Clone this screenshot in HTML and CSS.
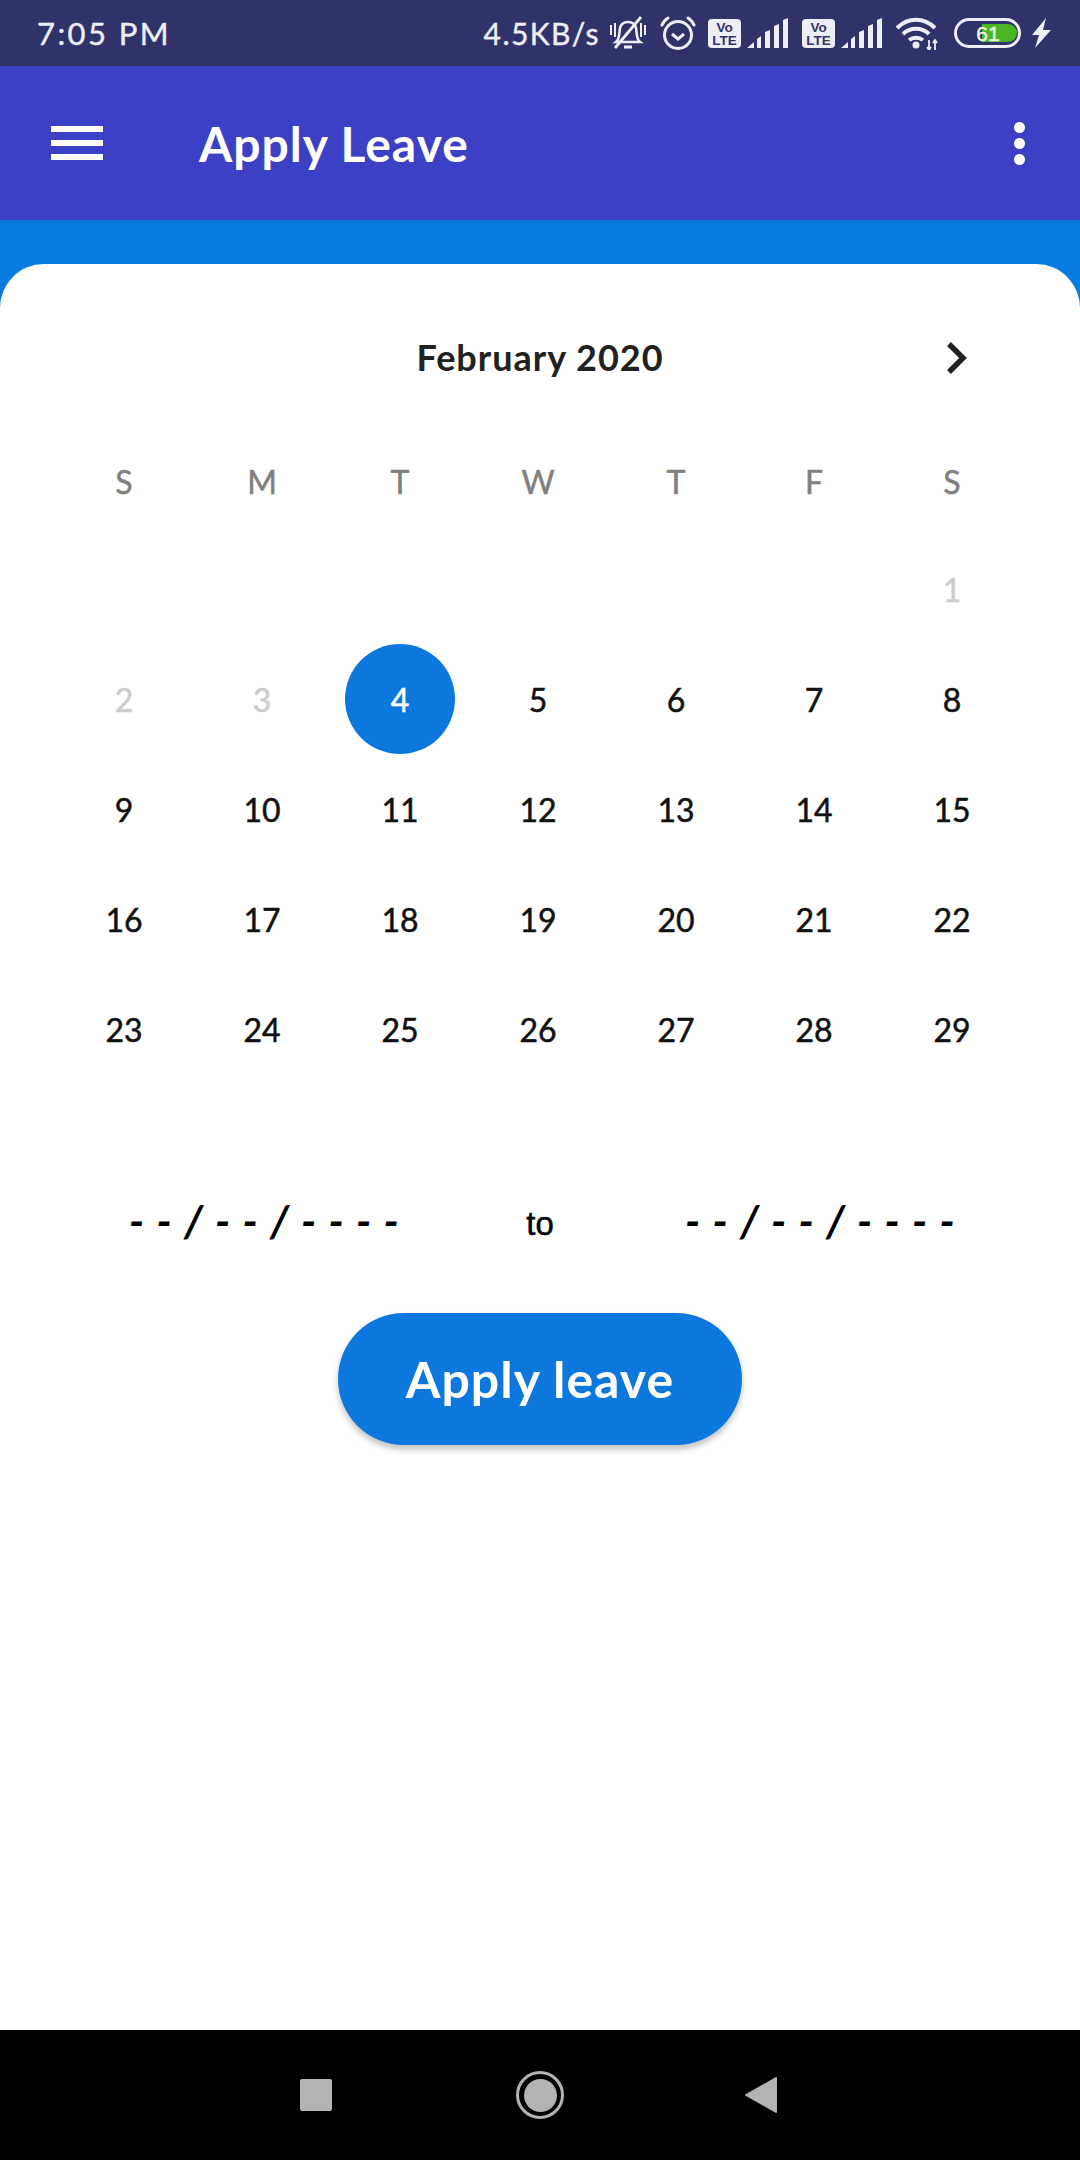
FILE: index.html
```html
<!DOCTYPE html>
<html lang="en">
<head>
    <meta charset="UTF-8">
    <meta name="viewport" content="width=device-width, initial-scale=1.0">
    <title>Apply Leave</title>
    <link rel="stylesheet" href="styles.css">
</head>
<body>

    <!-- Android status bar -->
    <div class="status-bar">
        <span class="status-time">7:05 PM</span>
        <div class="status-icons">
            <span class="status-speed">4.5KB/s</span>
            <svg class="icon-bell" width="36" height="34" viewBox="0 0 36 34" fill="none" stroke="#eeeef6" stroke-width="2.6">
                <path d="M6 26c4-3 3-9 4-14 1-4 4-6 8-6s7 2 8 6c1 5 0 11 4 14z"/>
                <path d="M14 31h8" stroke-width="3"/>
                <path d="M1 9v10M5 7v14M31 7v14M35 9v10" stroke-width="2"/>
                <path d="M31 1 5 32" stroke-width="2.8"/>
            </svg>
            <svg class="icon-alarm" width="36" height="34" viewBox="0 0 36 34" fill="none" stroke="#eeeef6" stroke-width="3">
                <circle cx="18" cy="19" r="13.5"/>
                <path d="M12 18l6 5 6-5"/>
                <path d="M2 9c1-3 3-5 6-7M34 9c-1-3-3-5-6-7" stroke-linecap="round"/>
            </svg>
            <svg class="icon-volte" width="33" height="29" viewBox="0 0 33 29">
                <rect width="33" height="29" rx="4" fill="#eeeef6"/>
                <text x="16.5" y="13" text-anchor="middle" class="volte-text">Vo</text>
                <text x="16.5" y="26" text-anchor="middle" class="volte-text">LTE</text>
            </svg>
            <svg class="icon-signal" width="41" height="30" viewBox="0 0 41 30" fill="#eeeef6">
                <path d="M0 30l7-6v6zM10 21l4-3v12h-4zM18 14l5-2v18h-5zM27 8l5-2v24h-5zM36 2l5-2v30h-5z"/>
            </svg>
            <svg class="icon-volte" width="33" height="29" viewBox="0 0 33 29">
                <rect width="33" height="29" rx="4" fill="#eeeef6"/>
                <text x="16.5" y="13" text-anchor="middle" class="volte-text">Vo</text>
                <text x="16.5" y="26" text-anchor="middle" class="volte-text">LTE</text>
            </svg>
            <svg class="icon-signal" width="41" height="30" viewBox="0 0 41 30" fill="#eeeef6">
                <path d="M0 30l7-6v6zM10 21l4-3v12h-4zM18 14l5-2v18h-5zM27 8l5-2v24h-5zM36 2l5-2v30h-5z"/>
            </svg>
            <svg class="icon-wifi" width="42" height="33" viewBox="0 0 42 33" fill="none" stroke="#eeeef6" stroke-width="4">
                <path d="M1 11c11-11 27-11 38 0M7 17c7-7 19-7 26 0M13 23c4-3 10-3 14 0"/>
                <circle cx="20" cy="28" r="3.5" fill="#eeeef6" stroke="none"/>
                <path d="M33 23v10M39 23v10M31 30l2 3 2-3M37 26l2-3 2 3" stroke-width="1.8"/>
            </svg>
            <svg class="icon-battery" width="67" height="30" viewBox="0 0 67 30">
                <rect x="1.5" y="1.5" width="64" height="27" rx="13.5" fill="none" stroke="#eeeef6" stroke-width="3"/>
                <path d="M28 6h26a9 9 0 0 1 0 18h-26z" fill="#4bb524"/>
                <text x="34" y="23" text-anchor="middle" class="battery-text">61</text>
            </svg>
            <svg class="icon-bolt" width="19" height="30" viewBox="0 0 19 30" fill="#eeeef6">
                <path d="M14 0 0 17h7L3 30 19 12h-8z"/>
            </svg>
        </div>
    </div>

    <header class="app-bar">
        <div class="menu-icon"><span></span><span></span><span></span></div>
        <h1 class="app-title">Apply Leave</h1>
        <div class="more-icon"><span></span><span></span><span></span></div>
    </header>

    <div class="page">
        <div class="card">
            <div class="month-row">
                <div></div>
                <div class="month-name">February 2020</div>
                <svg class="month-next" width="22" height="34" viewBox="0 0 22 34" fill="none" stroke="#212121" stroke-width="5.5">
                    <path d="M3 3l14 14L3 31"/>
                </svg>
            </div>

            <div class="week-row">
                <span>S</span><span>M</span><span>T</span><span>W</span><span>T</span><span>F</span><span>S</span>
            </div>

            <div class="days">
                <span></span><span></span><span></span><span></span><span></span><span></span><span class="past">1</span>
                <span class="past">2</span><span class="past">3</span><span class="today"><b>4</b></span><span>5</span><span>6</span><span>7</span><span>8</span>
                <span>9</span><span>10</span><span>11</span><span>12</span><span>13</span><span>14</span><span>15</span>
                <span>16</span><span>17</span><span>18</span><span>19</span><span>20</span><span>21</span><span>22</span>
                <span>23</span><span>24</span><span>25</span><span>26</span><span>27</span><span>28</span><span>29</span>
            </div>

            <div class="date-range">
                <span class="date-value">--/--/----</span>
                <span class="date-to">to</span>
                <span class="date-value">--/--/----</span>
            </div>

            <button class="apply-button">Apply leave</button>
        </div>
    </div>

    <!-- Android navigation bar -->
    <div class="nav-bar">
        <div class="nav-square"></div>
        <div class="nav-home"><span></span></div>
        <svg width="32" height="36" viewBox="0 0 32 36" fill="#b3b3b3">
            <path d="M31 0a1 1 0 0 1 1 1v34a1 1 0 0 1-1 1L1 19a1 1 0 0 1 0-2z"/>
        </svg>
    </div>

</body>
</html>
```

FILE: styles.css
```css
body {
    font-family: Lato, "Open Sans", sans-serif;
    margin: 0;
    width: 1080px;
    height: 2160px;
    display: flex;
    flex-direction: column;
    background-color: #fff;
}

/* status bar */
.status-bar {
    height: 66px;
    flex: none;
    display: flex;
    align-items: center;
    justify-content: space-between;
    padding: 0 29px 0 37px;
    background-color: #303369;
    color: #eeeef6;
}
.status-time {
    font-size: 31px;
    letter-spacing: 2.4px;
    -webkit-text-stroke: 0.4px #eeeef6;
}
.status-icons {
    display: flex;
    align-items: center;
}
.status-speed {
    font-size: 30px;
    letter-spacing: 1.4px;
    margin-right: 10px;
    -webkit-text-stroke: 0.4px #eeeef6;
}
.icon-bell { margin-right: 14px; }
.icon-alarm { margin-right: 12px; }
.icon-volte { margin-right: 6px; }
.icon-signal { margin-right: 14px; }
.icon-wifi { margin-right: 16px; }
.icon-battery { margin-right: 11px; }
.volte-text {
    font-family: "Liberation Sans", sans-serif;
    font-size: 13.5px;
    font-weight: 700;
    fill: #303369;
}
.battery-text {
    font-family: "Liberation Sans", sans-serif;
    font-size: 21px;
    fill: #eaf6e4;
    stroke: #eaf6e4;
    stroke-width: 0.5px;
}

/* app bar */
.app-bar {
    height: 154px;
    flex: none;
    display: flex;
    align-items: center;
    padding: 0 55px 0 51px;
    background-color: #3c40c4;
    color: #fff;
}
.menu-icon {
    width: 52px;
    display: flex;
    flex-direction: column;
    gap: 8px;
}
.menu-icon span {
    height: 6px;
    background-color: #fff;
}
.app-title {
    flex: 1;
    margin: 0 0 0 96px;
    font-size: 48px;
    font-weight: 700;
    letter-spacing: 1px;
}
.more-icon {
    display: flex;
    flex-direction: column;
    gap: 5px;
}
.more-icon span {
    width: 11px;
    height: 11px;
    border-radius: 50%;
    background-color: #fff;
}

/* blue strip behind the rounded card */
.page {
    flex: 1;
    padding-top: 44px;
    background: linear-gradient(#0872d2, #0a7be0 5px);
    display: flex;
}
.card {
    flex: 1;
    background-color: #fff;
    border-radius: 44px 44px 0 0;
    padding: 63px 55px 0;
}
.month-row {
    height: 60px;
    display: grid;
    grid-template-columns: 1fr auto 1fr;
    align-items: center;
}
.month-name {
    font-size: 36px;
    font-weight: 700;
    letter-spacing: 1px;
    color: #212121;
}
.month-next {
    justify-self: end;
    margin-right: 57px;
    margin-top: 1px;
}
.week-row,
.days {
    display: grid;
    grid-template-columns: repeat(7, 138px);
    text-align: center;
    font-size: 32px;
    -webkit-text-stroke: 0.5px;
}
.week-row {
    margin-top: 75px;
    height: 40px;
    line-height: 40px;
    color: #808080;
}
.days {
    margin-top: 32px;
    grid-auto-rows: 110px;
    color: #111;
}
.days span {
    display: flex;
    align-items: center;
    justify-content: center;
}
.days .past {
    color: #cccccc;
}
.days .today b {
    width: 110px;
    height: 110px;
    display: flex;
    align-items: center;
    justify-content: center;
    border-radius: 50%;
    background-color: #0c78de;
    color: #fff;
    font-weight: 400;
}
.date-range {
    margin-top: 110px;
    height: 60px;
    display: grid;
    grid-template-columns: repeat(3, 278px);
    justify-content: center;
    align-items: center;
    text-align: center;
}
.date-value {
    font-size: 44px;
    font-weight: 700;
    font-style: italic;
    letter-spacing: 12.2px;
    white-space: nowrap;
    line-height: 60px;
    margin-top: -8px;
    padding-left: 6px;
    text-align: left;
    color: #000;
}
.date-to {
    font-family: "Liberation Sans", sans-serif;
    font-size: 33px;
    -webkit-text-stroke: 0.5px #000;
    color: #000;
}
.apply-button {
    display: block;
    width: 404px;
    height: 132px;
    margin: 59px auto 0;
    border: none;
    border-radius: 66px;
    background-color: #0c78de;
    box-shadow: 0 4px 6px rgba(0, 0, 0, 0.25);
    color: #fff;
    font-family: inherit;
    font-size: 50px;
    font-weight: 700;
    letter-spacing: 1px;
}

/* navigation bar */
.nav-bar {
    height: 130px;
    flex: none;
    box-sizing: border-box;
    padding-right: 3px;
    background-color: #000;
    display: flex;
    align-items: center;
    justify-content: center;
}
.nav-square {
    width: 32px;
    height: 32px;
    border-radius: 2px;
    background-color: #b3b3b3;
    margin-right: 184px;
}
.nav-home {
    width: 48px;
    height: 48px;
    box-sizing: border-box;
    border: 3px solid #b3b3b3;
    border-radius: 50%;
    display: flex;
    align-items: center;
    justify-content: center;
    margin-right: 181px;
}
.nav-home span {
    width: 33px;
    height: 33px;
    border-radius: 50%;
    background-color: #b3b3b3;
}
```
